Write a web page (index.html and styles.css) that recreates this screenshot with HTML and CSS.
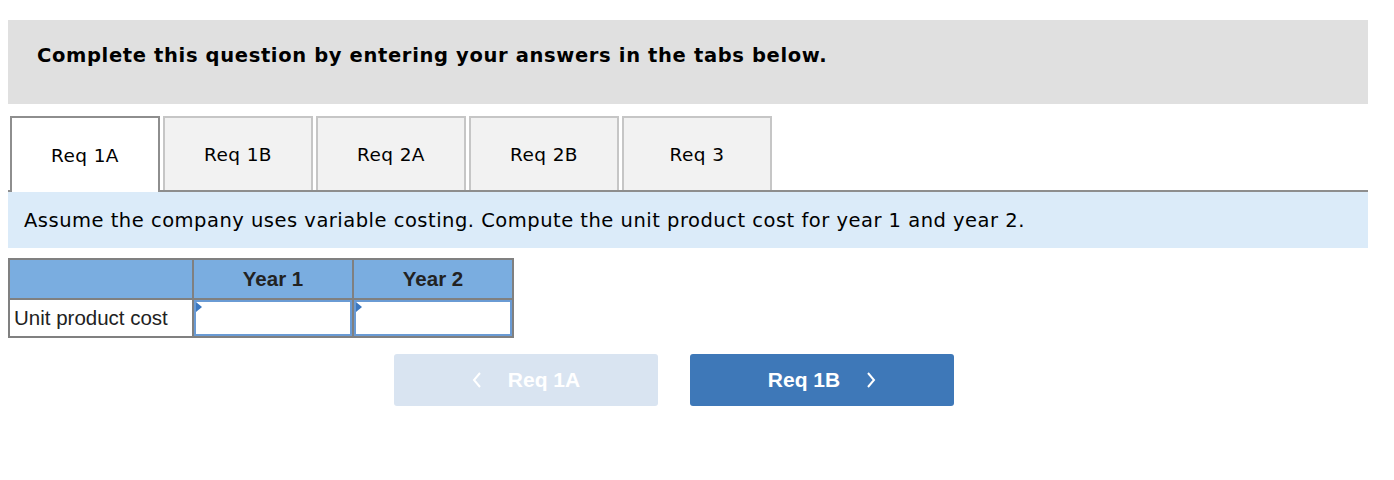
FILE: index.html
```html
<!DOCTYPE html>
<html>
<head>
<meta charset="utf-8">
<link rel="stylesheet" href="styles.css">
</head>
<body>
<div class="page">
  <div class="banner">Complete this question by entering your answers in the tabs below.</div>
  <div class="tabs">
    <div class="tab active">Req 1A</div>
    <div class="tab">Req 1B</div>
    <div class="tab">Req 2A</div>
    <div class="tab">Req 2B</div>
    <div class="tab">Req 3</div>
  </div>
  <div class="instr">Assume the company uses variable costing. Compute the unit product cost for year 1 and year 2.</div>
  <table class="grid">
    <tr class="head">
      <th class="c1"></th>
      <th class="c2">Year 1</th>
      <th class="c3">Year 2</th>
    </tr>
    <tr class="row">
      <td class="label">Unit product cost</td>
      <td class="cell"><div class="inp"><span class="flag"></span></div></td>
      <td class="cell"><div class="inp"><span class="flag"></span></div></td>
    </tr>
  </table>
  <div class="nav">
    <button class="btn prev"><svg class="chev" width="10" height="16" viewBox="0 0 10 16"><polyline points="8,1 2,8 8,15" fill="none" stroke="#fff" stroke-width="2"/></svg><span>Req 1A</span></button>
    <button class="btn next"><span>Req 1B</span><svg class="chev" width="10" height="16" viewBox="0 0 10 16"><polyline points="2,1 8,8 2,15" fill="none" stroke="#fff" stroke-width="2"/></svg></button>
  </div>
</div>
</body>
</html>
```
FILE: styles.css
```css
html, body { margin: 0; padding: 0; background: #fff; }
.page { padding: 20px 26px 0 8px; }
.banner {
  background: #e0e0e0;
  height: 84px;
  box-sizing: border-box;
  padding-left: 29px;
  padding-bottom: 14px;
  display: flex;
  align-items: center;
  font-family: "DejaVu Sans", Verdana, sans-serif;
  font-weight: bold;
  font-size: 19.5px;
  letter-spacing: 0.65px;
  color: #000;
}
.tabs {
  margin-top: 12px;
  display: flex;
  padding-left: 2px;
  border-bottom: 2px solid #8e8e8e;
  height: 74px;
}
.tab {
  width: 150px;
  box-sizing: border-box;
  height: 74px;
  margin-right: 3px;
  border: 2px solid #c6c6c6;
  border-bottom: none;
  background: #f2f2f2;
  display: flex;
  align-items: center;
  justify-content: center;
  font-family: "DejaVu Sans", Verdana, sans-serif;
  font-size: 18.5px;
  letter-spacing: 0.4px;
  color: #000;
}
.tab.active {
  background: #fff;
  border-color: #8e8e8e;
  height: 76px;
  margin-bottom: -2px;
  position: relative;
}
.instr {
  background: #dbebf9;
  height: 56px;
  box-sizing: border-box;
  padding-left: 16px;
  display: flex;
  align-items: center;
  font-family: "DejaVu Sans", Verdana, sans-serif;
  font-size: 19.5px;
  letter-spacing: 0.5px;
  color: #000;
}
.grid {
  margin-top: 10px;
  border-collapse: collapse;
  font-family: "Liberation Sans", Arial, sans-serif;
  font-size: 20.5px;
}
.grid th, .grid td {
  border: 2px solid #808080;
  padding: 0;
}
.head th {
  background: #7aade0;
  height: 38px;
  font-weight: bold;
  color: #222;
  text-align: center;
}
.c1 { width: 182px; }
.c2, .c3 { width: 158px; }
.row td { height: 36px; }
.label {
  padding-left: 4px !important;
  color: #222;
  text-align: left;
  white-space: nowrap;
}
.cell { background: #fff; }
.inp {
  position: relative;
  height: 36px;
  box-sizing: border-box;
  border: 2px solid #6a9bd4;
  background: #fff;
}
.flag {
  position: absolute;
  left: 0;
  top: 0;
  width: 0;
  height: 0;
  border-top: 5px solid transparent;
  border-bottom: 5px solid transparent;
  border-left: 6px solid #3c78c0;
}
.nav {
  margin-top: 16px;
  display: flex;
  gap: 32px;
  padding-left: 386px;
}
.btn {
  width: 264px;
  height: 52px;
  border: none;
  border-radius: 3px;
  display: flex;
  align-items: center;
  justify-content: center;
  gap: 26px;
  font-family: "Liberation Sans", Arial, sans-serif;
  font-weight: bold;
  font-size: 21px;
  color: #fff;
  padding: 0;
}
.btn.prev { background: #d9e4f1; }
.btn.next { background: #3e78b8; }
.chev { display: block; }
```
